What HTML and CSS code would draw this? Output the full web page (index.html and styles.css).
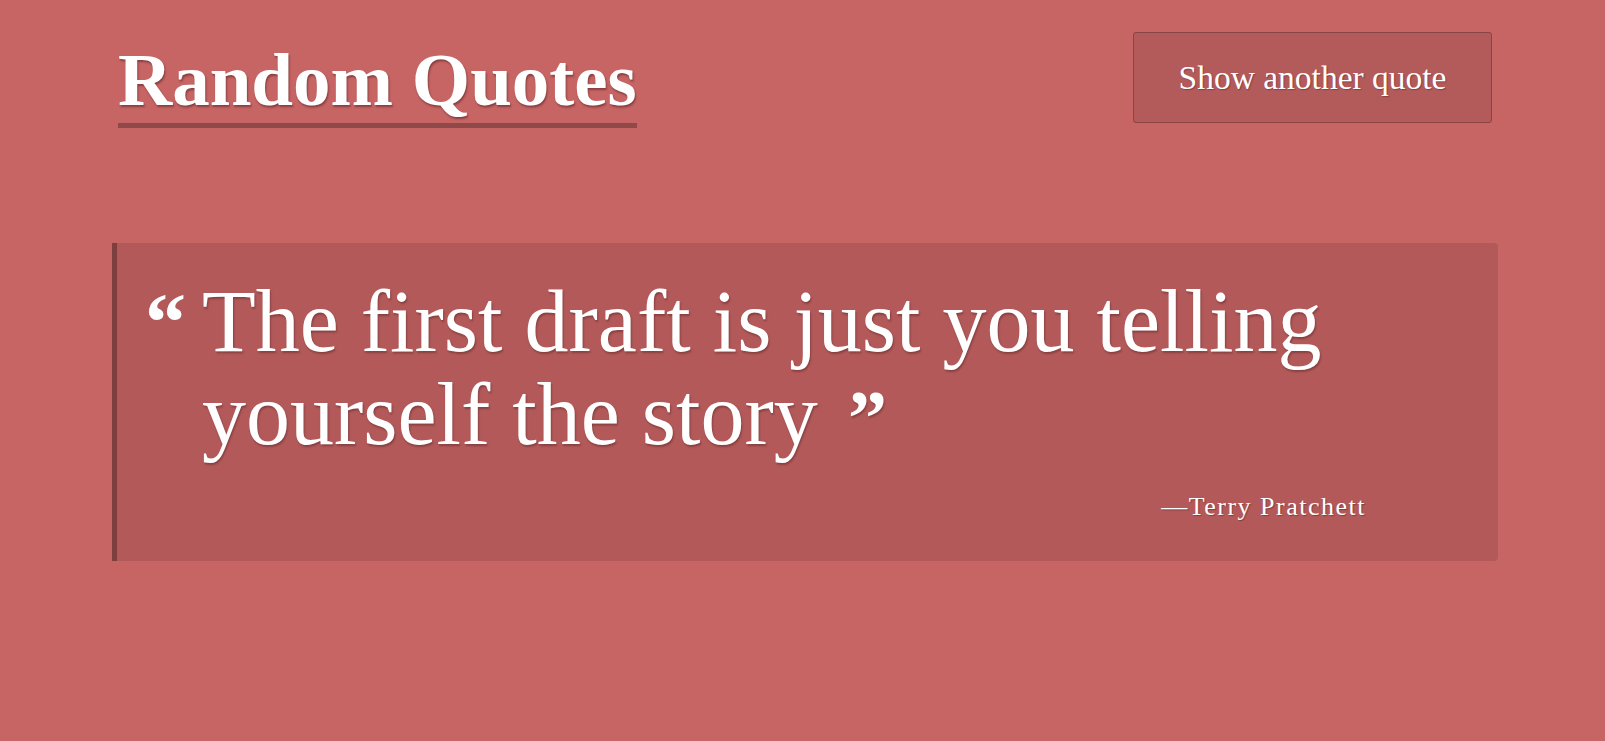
FILE: index.html
```html
<!DOCTYPE html>
<html lang="en">
<head>
<meta charset="utf-8">
<title>Random Quotes</title>
<link rel="stylesheet" href="styles.css">
</head>
<body>
<div class="page">
  <header class="header">
    <h1 class="title">Random Quotes</h1>
    <button class="btn" type="button">Show another quote</button>
  </header>
  <section class="card">
    <div class="quote-row">
      <span class="mark open">&ldquo;</span>
      <div class="quote-text">
        <div class="line">The first draft is just you telling</div>
        <div class="line last"><span>yourself the story</span><span class="mark close">&rdquo;</span></div>
      </div>
    </div>
    <div class="author">&mdash;Terry Pratchett</div>
  </section>
</div>
</body>
</html>
```
FILE: styles.css
```css
html, body {
  margin: 0;
  padding: 0;
  background: #c76464;
  height: 100%;
}
body {
  font-family: "Liberation Serif", "Times New Roman", serif;
  color: #ffffff;
}
.page {
  padding: 32px 107px 0 112px;
}
.header {
  display: flex;
  justify-content: space-between;
  align-items: flex-start;
  padding: 0 6px;
}
.title {
  margin: 5px 0 0 0;
  font-size: 75px;
  line-height: 86px;
  font-weight: 700;
  border-bottom: 5px solid #8f4949;
  text-shadow: 1px 2px 2px rgba(60, 20, 20, 0.45);
}
.btn {
  width: 359px;
  height: 91px;
  margin: 0;
  padding: 0;
  background: #b35a5a;
  border: 1px solid #8a4444;
  border-radius: 3px;
  color: #ffffff;
  font-family: "Liberation Serif", "Times New Roman", serif;
  font-size: 33.5px;
  text-shadow: 1px 1px 1px rgba(60, 20, 20, 0.35);
  cursor: pointer;
}
.card {
  margin-top: 115px;
  background: #b35959;
  border-left: 5px solid #7d3e3e;
  border-radius: 0 4px 4px 0;
  padding: 32px 0 39px 30px;
}
.quote-row {
  display: flex;
  align-items: flex-start;
}
.mark {
  font-weight: 700;
  line-height: 93px;
}
.mark.open {
  font-size: 82px;
  flex: 0 0 55px;
  position: relative;
  top: 1px;
  left: -2px;
}
.quote-text {
  font-size: 88px;
  line-height: 93px;
  text-shadow: 1px 2px 2px rgba(60, 20, 20, 0.35);
}
.line.last {
  display: flex;
  align-items: baseline;
}
.mark.close {
  font-size: 78px;
  margin-left: 30px;
}
.author {
  margin-top: 27px;
  text-align: right;
  padding-right: 132px;
  font-size: 26px;
  line-height: 31px;
  letter-spacing: 1.5px;
  text-shadow: 1px 1px 1px rgba(60, 20, 20, 0.4);
}
```
